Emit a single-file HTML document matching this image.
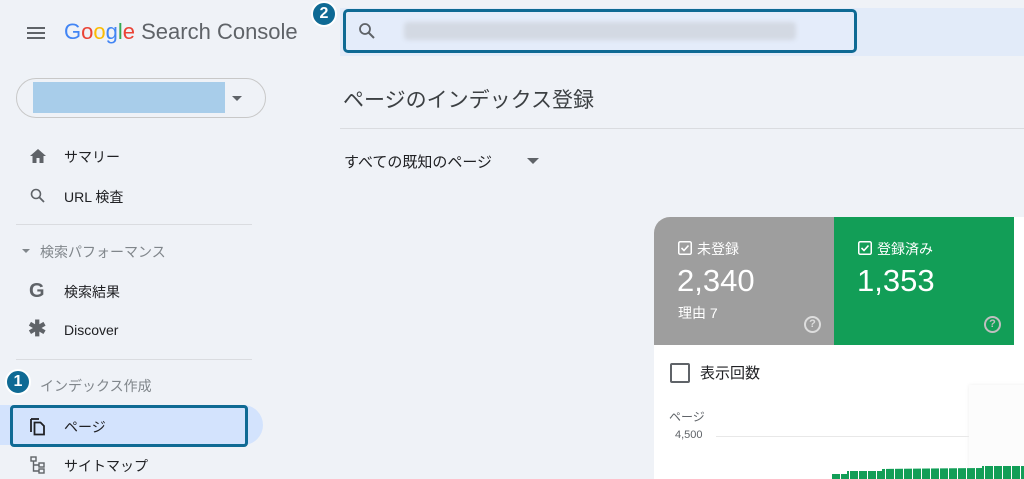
<!DOCTYPE html>
<html><head><meta charset="utf-8"><style>
*{margin:0;padding:0;box-sizing:border-box}
body{width:1024px;height:479px;overflow:hidden;background:#eff2f7;font-family:"Liberation Sans","Noto Sans CJK JP",sans-serif;position:relative;color:#3c4043}
.a{position:absolute}
.nav{font-size:14px;color:#202124}
.badge{position:absolute;width:26px;height:26px;border-radius:50%;background:#0f6a94;border:2px solid #fff;color:#fff;font-weight:bold;font-size:16px;text-align:center;line-height:22px}
</style></head><body>
<div class="a" style="left:27px;top:27px;width:18px;height:2px;background:#5f6368;box-shadow:0 5px 0 #5f6368,0 10px 0 #5f6368"></div>
<div class="a" style="left:64px;top:19px;font-size:22px;white-space:nowrap"><span style="color:#4285f4">G</span><span style="color:#ea4335">o</span><span style="color:#fbbc05">o</span><span style="color:#4285f4">g</span><span style="color:#34a853">l</span><span style="color:#ea4335">e</span><span style="color:#5f6368"> Search Console</span></div>
<div class="a" style="left:16px;top:78px;width:250px;height:40px;border:1px solid #c8c8c8;border-radius:20px"></div>
<div class="a" style="left:33px;top:82px;width:192px;height:31px;background:#a8cdea"></div>
<div class="a" style="left:232px;top:96px;border:5px solid transparent;border-top:5px solid #5f6368"></div>
<svg class="a" style="left:29px;top:148px" width="18" height="16" viewBox="0 0 18 16"><path d="M9 1L1 8h2.5v7h4v-5h3v5h4V8H17z" fill="#5f6368"/></svg>
<div class="a nav" style="left:64px;top:147px">サマリー</div>
<svg class="a" style="left:30px;top:188px" width="16" height="16" viewBox="0 0 16 16"><circle cx="6" cy="6" r="4.5" stroke="#5f6368" stroke-width="1.6" fill="none"/><path d="M9.5 9.5L14 14" stroke="#5f6368" stroke-width="1.8"/></svg>
<div class="a nav" style="left:64px;top:187px">URL 検査</div>
<div class="a" style="left:16px;top:224px;width:236px;height:1px;background:#dadce0"></div>
<div class="a" style="left:22px;top:249px;border:4px solid transparent;border-top:4px solid #80868b"></div>
<div class="a" style="left:40px;top:242px;font-size:14px;color:#80868b">検索パフォーマンス</div>
<div class="a" style="left:29px;top:280px;font-size:20px;font-weight:bold;color:#5f6368">G</div>
<div class="a nav" style="left:64px;top:282px">検索結果</div>
<div class="a" style="left:28px;top:316px;font-size:22px;font-weight:bold;color:#5f6368">✱</div>
<div class="a nav" style="left:64px;top:322px">Discover</div>
<div class="a" style="left:16px;top:359px;width:236px;height:1px;background:#dadce0"></div>
<div class="badge" style="left:5px;top:369px">1</div>
<div class="a" style="left:40px;top:376px;font-size:14px;color:#80868b">インデックス作成</div>
<div class="a" style="left:0;top:405px;width:263px;height:40px;background:#d3e3fd;border-radius:0 20px 20px 0"></div>
<div class="a" style="left:10px;top:405px;width:238px;height:42px;border:3px solid #0f6a94;border-radius:4px"></div>
<svg class="a" style="left:29px;top:416px" width="18" height="20" viewBox="0 0 18 20"><path d="M2 3v13" stroke="#202124" stroke-width="1.8" fill="none"/><path d="M2 3h8" stroke="#202124" stroke-width="1.8"/><path d="M5.5 6.5h6l3.5 3.5v8.5h-9.5z" stroke="#202124" stroke-width="1.8" fill="none"/></svg>
<div class="a nav" style="left:64px;top:417px">ページ</div>
<svg class="a" style="left:30px;top:456px" width="16" height="18" viewBox="0 0 16 18"><rect x="1" y="1" width="5" height="4" stroke="#5f6368" stroke-width="1.4" fill="none"/><rect x="9" y="7" width="5" height="4" stroke="#5f6368" stroke-width="1.4" fill="none"/><rect x="9" y="13" width="5" height="4" stroke="#5f6368" stroke-width="1.4" fill="none"/><path d="M3.5 5v10H9M3.5 9H9" stroke="#5f6368" stroke-width="1.4" fill="none"/></svg>
<div class="a nav" style="left:64px;top:456px">サイトマップ</div>
<div class="a" style="left:340px;top:8px;width:684px;height:48px;background:#e2ebf9"></div>
<div class="a" style="left:343px;top:9px;width:514px;height:44px;border:3px solid #0f6a94;border-radius:5px;background:#e4ecfa"></div>
<svg class="a" style="left:358px;top:22px" width="18" height="18" viewBox="0 0 18 18"><circle cx="7" cy="7" r="5" stroke="#5f6368" stroke-width="1.8" fill="none"/><path d="M10.5 10.5L16 16" stroke="#5f6368" stroke-width="2"/></svg>
<div class="a" style="left:404px;top:22px;width:392px;height:18px;background:#d3d9e3;border-radius:4px;filter:blur(2px)"></div>
<div class="badge" style="left:311px;top:1px">2</div>
<div class="a" style="left:343px;top:84px;font-size:21px;color:#3c4043">ページのインデックス登録</div>
<div class="a" style="left:340px;top:128px;width:684px;height:1px;background:#dadce0"></div>
<div class="a" style="left:344px;top:151px;font-size:15px;color:#202124">すべての既知のページ</div>
<div class="a" style="left:527px;top:158px;border:6px solid transparent;border-top:6px solid #5f6368"></div>
<div class="a" style="left:654px;top:217px;width:370px;height:262px;background:#fff;border-radius:16px 0 0 0;overflow:hidden">
 <div class="a" style="left:0;top:0;width:180px;height:128px;background:#9e9e9e;color:#fff">
  <svg class="a" style="left:24px;top:24px" width="14" height="14" viewBox="0 0 14 14"><rect x="0.75" y="0.75" width="12.5" height="12.5" rx="1.5" stroke="#fff" stroke-width="1.5" fill="none"/><path d="M3.5 7l2.5 2.5 4.5-5" stroke="#fff" stroke-width="1.6" fill="none"/></svg>
  <div class="a" style="left:43px;top:22px;font-size:14px">未登録</div>
  <div class="a" style="left:23px;top:46px;font-size:31px">2,340</div>
  <div class="a" style="left:24px;top:86px;font-size:14px">理由 7</div>
  <div class="a" style="left:150px;top:99px;width:17px;height:17px;border:2px solid #ddd;border-radius:50%;font-size:11px;text-align:center;line-height:13px;color:#ddd;font-weight:bold">?</div>
 </div>
 <div class="a" style="left:180px;top:0;width:180px;height:128px;background:#129e57;color:#fff">
  <svg class="a" style="left:24px;top:24px" width="14" height="14" viewBox="0 0 14 14"><rect x="0.75" y="0.75" width="12.5" height="12.5" rx="1.5" stroke="#fff" stroke-width="1.5" fill="none"/><path d="M3.5 7l2.5 2.5 4.5-5" stroke="#fff" stroke-width="1.6" fill="none"/></svg>
  <div class="a" style="left:43px;top:22px;font-size:14px">登録済み</div>
  <div class="a" style="left:23px;top:46px;font-size:31px">1,353</div>
  <div class="a" style="left:150px;top:99px;width:17px;height:17px;border:2px solid #bfbfbf;border-radius:50%;font-size:11px;text-align:center;line-height:13px;color:#bfbfbf;font-weight:bold">?</div>
 </div>
 <div class="a" style="left:16px;top:146px;width:20px;height:20px;border:2px solid #5f6368;border-radius:2px"></div>
 <div class="a" style="left:46px;top:145px;font-size:15px;color:#202124">表示回数</div>
 <div class="a" style="left:15px;top:191px;font-size:12px;color:#5f6368">ページ</div>
 <div class="a" style="left:21px;top:212px;font-size:11px;color:#5f6368">4,500</div>
 <div class="a" style="left:62px;top:219px;width:308px;height:1px;background:#e8e8e8"></div>
 <div class="a" style="left:315px;top:168px;width:60px;height:94px;background:#fcfcfc;box-shadow:0 0 4px #eee"></div>
 <div class="a" style="left:178px;top:249px;width:192px;height:13px;background:repeating-linear-gradient(90deg,#129e57 0 8px,#fff 8px 9px);clip-path:polygon(0 8px,15px 8px,15px 5px,50px 5px,50px 3px,150px 2px,150px 0,192px 0,192px 13px,0 13px)"></div>
</div>
</body></html>
